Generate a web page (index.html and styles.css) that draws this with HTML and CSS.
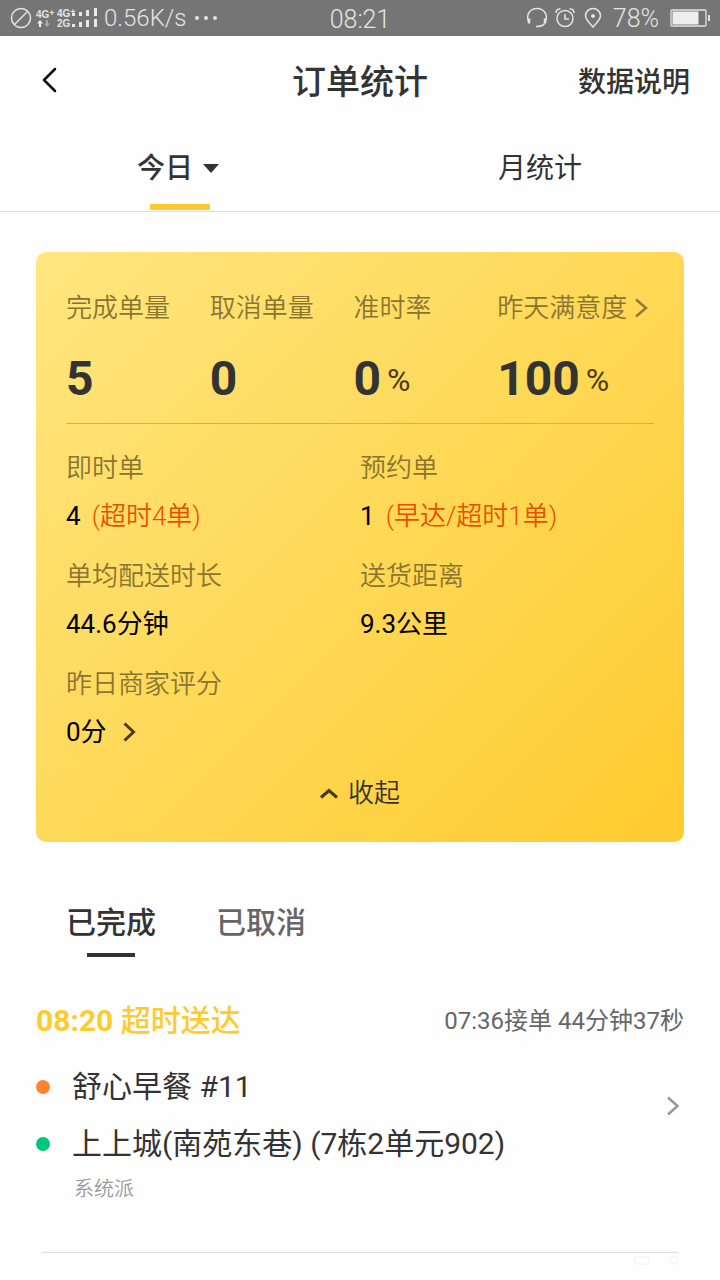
FILE: index.html
```html
<!DOCTYPE html>
<html lang="zh-CN">
<head>
    <meta charset="UTF-8">
    <meta name="viewport" content="width=device-width, initial-scale=1.0">
    <title>订单统计</title>
    <link rel="stylesheet" href="styles.css">
</head>
<body>
    <div class="status-bar">
        <div class="status-left">
            <svg width="22" height="22" viewBox="0 0 22 22" fill="none" stroke="#e4e4e4" stroke-width="1.5">
                <circle cx="11" cy="11" r="9.5"/>
                <path d="M4.5 17.5L17.5 4.5"/>
            </svg>
            <div class="network">
                <span>4G<sup>+</sup></span>
                <svg width="16" height="8" viewBox="0 0 16 8">
                    <path d="M4 0L7 3.5H5V7H3V3.5H1Z" fill="#eee"/>
                    <path d="M11 7L8 3.5H10V0H12V3.5H14Z" fill="#aaa"/>
                </svg>
            </div>
            <div class="network">
                <span>4G<sup>+</sup></span>
                <span>2G</span>
            </div>
            <svg class="signal" width="26" height="20" viewBox="0 0 26 20" fill="#e8e8e8">
                <path d="M0 5h3v3H0zM7 4h3v4H7zM14 2h3v6h-3zM22 0h3v8h-3z"/>
                <path d="M0 16h3v3H0zM7 14h3v5H7zM14 12h3v7h-3zM22 11h3v8h-3z"/>
            </svg>
            <span class="speed">0.56K/s</span>
            <svg width="24" height="4" viewBox="0 0 24 4" fill="#e4e4e4">
                <circle cx="2" cy="2" r="2"/>
                <circle cx="11" cy="2" r="2"/>
                <circle cx="20" cy="2" r="2"/>
            </svg>
        </div>
        <span class="clock">08:21</span>
        <div class="status-right">
            <svg width="22" height="22" viewBox="0 0 22 22" fill="none" stroke="#e4e4e4" stroke-width="1.5">
                <path d="M2.5 14.5C-.5 6.5 5 1.5 11 1.5s11.500 5 8.500 13"/>
                <path d="M3 11.5v5M19 11.5v5" stroke-width="2.5"/>
                <path d="M18.5 16.5C17 19 15 19.5 10 19.5"/>
            </svg>
            <svg width="22" height="22" viewBox="0 0 22 22" fill="none" stroke="#e4e4e4" stroke-width="1.5">
                <circle cx="11" cy="11.5" r="8"/>
                <path d="M11 7v5h4M2 6C2 3 4 1.5 6.5 2M20 6c0-3-2-4.5-4.5-4"/>
            </svg>
            <svg width="22" height="22" viewBox="0 0 22 22" fill="none" stroke="#e4e4e4" stroke-width="1.5">
                <path d="M11 20C7 15.5 3.5 12.5 3.5 8.8a7.5 7.3 0 0 1 15 0C18.5 12.5 15 15.5 11 20Z"/>
                <circle cx="11" cy="9" r="1.5" fill="#e4e4e4" stroke-width="1"/>
            </svg>
            <span class="battery-text">78%</span>
            <svg width="40" height="18" viewBox="0 0 40 18" fill="none">
                <rect x="1" y="1" width="35" height="16" rx="1" stroke="#e4e4e4" stroke-width="1.3"/>
                <rect x="2.5" y="2.5" width="26" height="13" fill="#eee"/>
                <rect x="38" y="6" width="2" height="6" fill="#e4e4e4"/>
            </svg>
        </div>
    </div>

    <header class="header">
        <button class="back" aria-label="返回">
            <svg width="16" height="26" viewBox="0 0 16 26" fill="none" stroke="#000" stroke-width="2.5" stroke-linecap="round" stroke-linejoin="round">
                <path d="M13 2L2 13L13 24"/>
            </svg>
        </button>
        <h1>订单统计</h1>
        <a class="explain" href="#">数据说明</a>
    </header>

    <nav class="main-tabs">
        <button class="tab active">
            今日
            <svg class="drop-arrow" width="16" height="9" viewBox="0 0 16 9" fill="#333"><path d="M0 0h16L8 9Z"/></svg>
        </button>
        <button class="tab">月统计</button>
    </nav>

    <main class="content">
        <section class="card">
            <div class="metrics">
                <div>
                    <p class="label">完成单量</p>
                    <p class="number">5</p>
                </div>
                <div>
                    <p class="label">取消单量</p>
                    <p class="number">0</p>
                </div>
                <div>
                    <p class="label">准时率</p>
                    <p class="number">0<small>%</small></p>
                </div>
                <div>
                    <p class="label">昨天满意度<svg class="label-arrow" width="13" height="20" viewBox="0 0 13 20" fill="none" stroke="#917b33" stroke-width="2.5"><path d="M1 1.5L11 10L1 18.5"/></svg></p>
                    <p class="number">100<small>%</small></p>
                </div>
            </div>

            <div class="details">
                <div>
                    <p class="label">即时单</p>
                    <p class="value">4<span class="late">(超时4单)</span></p>
                </div>
                <div>
                    <p class="label">预约单</p>
                    <p class="value">1<span class="late">(早达/超时1单)</span></p>
                </div>
                <div>
                    <p class="label">单均配送时长</p>
                    <p class="value">44.6分钟</p>
                </div>
                <div>
                    <p class="label">送货距离</p>
                    <p class="value">9.3公里</p>
                </div>
                <div>
                    <p class="label">昨日商家评分</p>
                    <p class="value">0分<svg class="value-arrow" width="13" height="20" viewBox="0 0 13 20" fill="none" stroke="#473a16" stroke-width="3"><path d="M1.5 1.5L10.5 10L1.5 18.5"/></svg></p>
                </div>
            </div>

            <button class="collapse">
                <svg width="18" height="11" viewBox="0 0 18 11" fill="none" stroke="#433a22" stroke-width="3"><path d="M1 9.5L9 2.5L17 9.5"/></svg>
                收起
            </button>
        </section>

        <nav class="order-tabs">
            <button class="order-tab active">已完成</button>
            <button class="order-tab">已取消</button>
        </nav>

        <article class="order">
            <div class="order-head">
                <h2><b>08:20</b> 超时送达</h2>
                <span class="order-time">07:36接单 44分钟37秒</span>
            </div>
            <a class="order-body" href="#">
                <div class="order-places">
                    <p class="place shop">舒心早餐 #11</p>
                    <p class="place customer">上上城(南苑东巷) (7栋2单元902)</p>
                </div>
                <svg class="order-arrow" width="13" height="20" viewBox="0 0 13 20" fill="none" stroke="#999" stroke-width="2.5"><path d="M1 1.5L10.5 10L1 18.5"/></svg>
            </a>
            <p class="source">系统派</p>
        </article>

        <div class="order-end">
            <svg width="46" height="10" viewBox="0 0 46 10" fill="none" stroke="#f5f5f5" stroke-width="1.5">
                <rect x="2" y="1" width="15" height="7" rx="3"/>
                <circle cx="42" cy="4.5" r="3.5"/>
            </svg>
        </div>
    </main>
</body>
</html>
```
FILE: styles.css
```css
* {
    box-sizing: border-box;
}
body {
    margin: 0;
    background-color: #fefefe;
    color: #333;
    font-family: Roboto, "Noto Sans CJK SC", sans-serif;
}
h1, h2, p {
    margin: 0;
}
button {
    padding: 0;
    border: none;
    background: none;
    color: inherit;
    font-family: inherit;
    cursor: pointer;
}
a {
    color: inherit;
    text-decoration: none;
}
svg {
    flex-shrink: 0;
}

/* status bar */
.status-bar {
    display: grid;
    grid-template-columns: 1fr auto 1fr;
    align-items: center;
    height: 36px;
    padding: 0 10px;
    background-color: #757575;
    color: #e4e4e4;
    font-size: 25px;
    font-weight: 350;
}
.status-left, .status-right {
    display: flex;
    align-items: center;
}
.status-right {
    justify-content: flex-end;
    gap: 6px;
}
.network {
    display: flex;
    flex-direction: column;
    width: 21px;
    margin-left: 4px;
    margin-right: -4px;
    font-family: "Liberation Sans", sans-serif;
    font-size: 10px;
    font-weight: bold;
    line-height: 10px;
    white-space: nowrap;
}
.network sup {
    font-size: 9px;
    line-height: 1;
    vertical-align: 2px;
}
.signal {
    margin-left: -2px;
}
.speed {
    margin: 0 8px 0 6px;
    font-size: 24px;
}
.clock {
    padding-top: 2px;
}
.battery-text {
    margin: 0 5px 0 3px;
}

/* header */
.header {
    display: grid;
    grid-template-columns: 1fr auto 1fr;
    align-items: center;
    height: 90px;
    padding: 0 30px 3px;
}
.back {
    justify-self: start;
    display: flex;
    padding: 8px 12px;
}
.header h1 {
    font-size: 34px;
    font-weight: 500;
}
.explain {
    justify-self: end;
    font-size: 28px;
    font-weight: 500;
}

/* main tabs */
.main-tabs {
    display: flex;
    height: 86px;
    border-bottom: 1px solid #ddd;
}
.tab {
    position: relative;
    display: flex;
    flex: 1;
    justify-content: center;
    align-items: center;
    gap: 10px;
    padding-bottom: 5px;
    font-size: 28px;
}
.tab.active {
    font-weight: 500;
}
.tab.active::after {
    content: "";
    position: absolute;
    bottom: 1px;
    left: 50%;
    width: 60px;
    height: 6px;
    margin-left: -30px;
    background-color: #fecb2e;
}
.drop-arrow {
    margin: 5px 4px 0 0;
}

.content {
    padding: 40px 36px 0;
}

/* summary card */
.card {
    padding: 38px 30px 31px;
    border-radius: 10px;
    background: linear-gradient(135deg, #ffe680, #fecb2e);
}
.label {
    display: flex;
    align-items: center;
    color: #8a7530;
    font-size: 26px;
    font-weight: 350;
    line-height: 36px;
    white-space: nowrap;
}
.label-arrow {
    margin-left: 8px;
}
.metrics {
    display: grid;
    grid-template-columns: 11fr 11fr 11fr 12fr;
    padding-bottom: 16px;
    border-bottom: 1px solid #d3b24b;
}
.number {
    display: flex;
    align-items: center;
    margin-top: 25px;
    font-size: 48px;
    font-weight: bold;
    line-height: 56px;
}
.number small {
    margin-left: 6px;
    padding-top: 2px;
    color: #4a3a16;
    font-size: 32px;
    font-weight: 400;
    line-height: 42px;
}
.details {
    display: grid;
    grid-template-columns: 1fr 1fr;
    row-gap: 24px;
    padding-top: 26px;
}
.value {
    display: flex;
    align-items: center;
    margin-top: 12px;
    color: #000;
    font-size: 26px;
    font-weight: 400;
    line-height: 36px;
}
.late {
    margin-left: 11px;
    color: #e85000;
    font-weight: 350;
}
.value-arrow {
    margin-left: 16px;
}
.collapse {
    display: flex;
    align-items: center;
    gap: 10px;
    margin: 25px auto 0;
    font-size: 26px;
    font-weight: 350;
    line-height: 36px;
}

/* order list */
.order-tabs {
    display: flex;
    gap: 60px;
    padding: 60px 30px 0;
}
.order-tab {
    display: flex;
    flex-direction: column;
    align-items: center;
    color: #666;
    font-size: 30px;
    font-weight: 500;
    line-height: 42px;
}
.order-tab.active {
    color: #333;
}
.order-tab.active::after {
    content: "";
    width: 48px;
    height: 4px;
    margin-top: 9px;
    background-color: #333;
}
.order {
    padding: 43px 0 49px;
}
.order-head {
    display: flex;
    justify-content: space-between;
    align-items: center;
}
.order-head h2 {
    color: #fecb2e;
    font-size: 30px;
    font-weight: 500;
    line-height: 42px;
}
.order-head b {
    font-weight: 700;
}
.order-time {
    color: #666;
    font-size: 24px;
    font-weight: 400;
    line-height: 42px;
}
.order-body {
    display: flex;
    justify-content: space-between;
    align-items: center;
    padding: 24px 4px 0 0;
}
.order-arrow {
    margin-bottom: 20px;
}
.place {
    display: flex;
    align-items: center;
    gap: 22px;
    font-size: 30px;
    font-weight: 400;
    line-height: 42px;
}
.place::before {
    content: "";
    width: 14px;
    height: 14px;
    border-radius: 50%;
    background-color: #ff8430;
}
.place.customer {
    margin-top: 15px;
}
.place.customer::before {
    background-color: #00c878;
}
.source {
    margin-top: 10px;
    padding-left: 38px;
    color: #999;
    font-size: 20px;
    font-weight: 350;
    line-height: 28px;
}
.order-end {
    display: flex;
    justify-content: flex-end;
    margin: 0 6px;
    padding-top: 3px;
    border-top: 1px solid #ddd;
}
```
